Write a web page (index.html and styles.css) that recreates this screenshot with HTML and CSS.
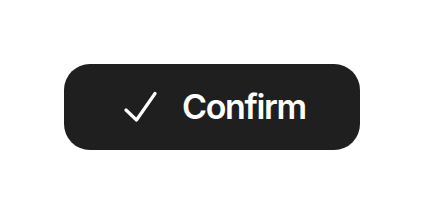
FILE: index.html
```html
<!DOCTYPE html>
<html>
<head>
<meta charset="utf-8">
<link rel="stylesheet" href="styles.css">
</head>
<body>
<div class="stage">
  <button class="confirm-btn">
    <svg class="check" width="33" height="32" viewBox="0 0 33 32" aria-hidden="true">
      <path d="M2 19 L12.5 29 L31 2.5" fill="none" stroke="#ffffff" stroke-width="3.2" stroke-linecap="round" stroke-linejoin="round"/>
    </svg>
    <span class="label">Confirm</span>
  </button>
</div>
</body>
</html>
```

FILE: styles.css
```css
html, body {
  margin: 0;
  padding: 0;
  background: #ffffff;
}
.stage {
  width: 424px;
  height: 214px;
  display: flex;
  align-items: center;
  justify-content: center;
}
.confirm-btn {
  width: 296px;
  height: 86px;
  border: none;
  border-radius: 26px;
  background: #1f1f1f;
  color: #ffffff;
  display: flex;
  align-items: center;
  justify-content: flex-start;
  padding: 0 0 0 60px;
  gap: 25px;
  box-sizing: border-box;
  font-family: Inter, "Noto Sans", sans-serif;
}
.check {
  display: block;
  flex: none;
}
.label {
  font-size: 34px;
  font-weight: 600;
  line-height: 1;
  letter-spacing: -1.35px;
}
```
